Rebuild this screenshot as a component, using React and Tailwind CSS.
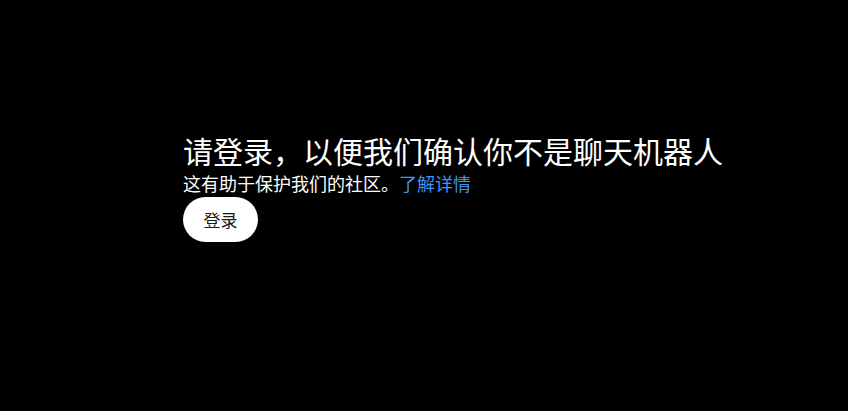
import React from 'react';

const App = () => {
  return (
    <div
      className="min-h-[411px] w-full bg-black text-white"
      style={{ fontFamily: '"Noto Sans CJK SC", "Liberation Sans", sans-serif' }}
    >
      <div className="pl-[183px] pt-[130px]">
        <h1 className="text-[30px] leading-[40px] font-normal">请登录，以便我们确认你不是聊天机器人</h1>
        <p className="text-[18px] leading-[26px]">
          这有助于保护我们的社区。<a href="#" className="text-[#3f94f5]">了解详情</a>
        </p>
        <button className="mt-[1px] h-[45px] w-[75px] rounded-full bg-white text-[17px] text-[#1a1a1a]">
          登录
        </button>
      </div>
    </div>
  );
};

export default App;
